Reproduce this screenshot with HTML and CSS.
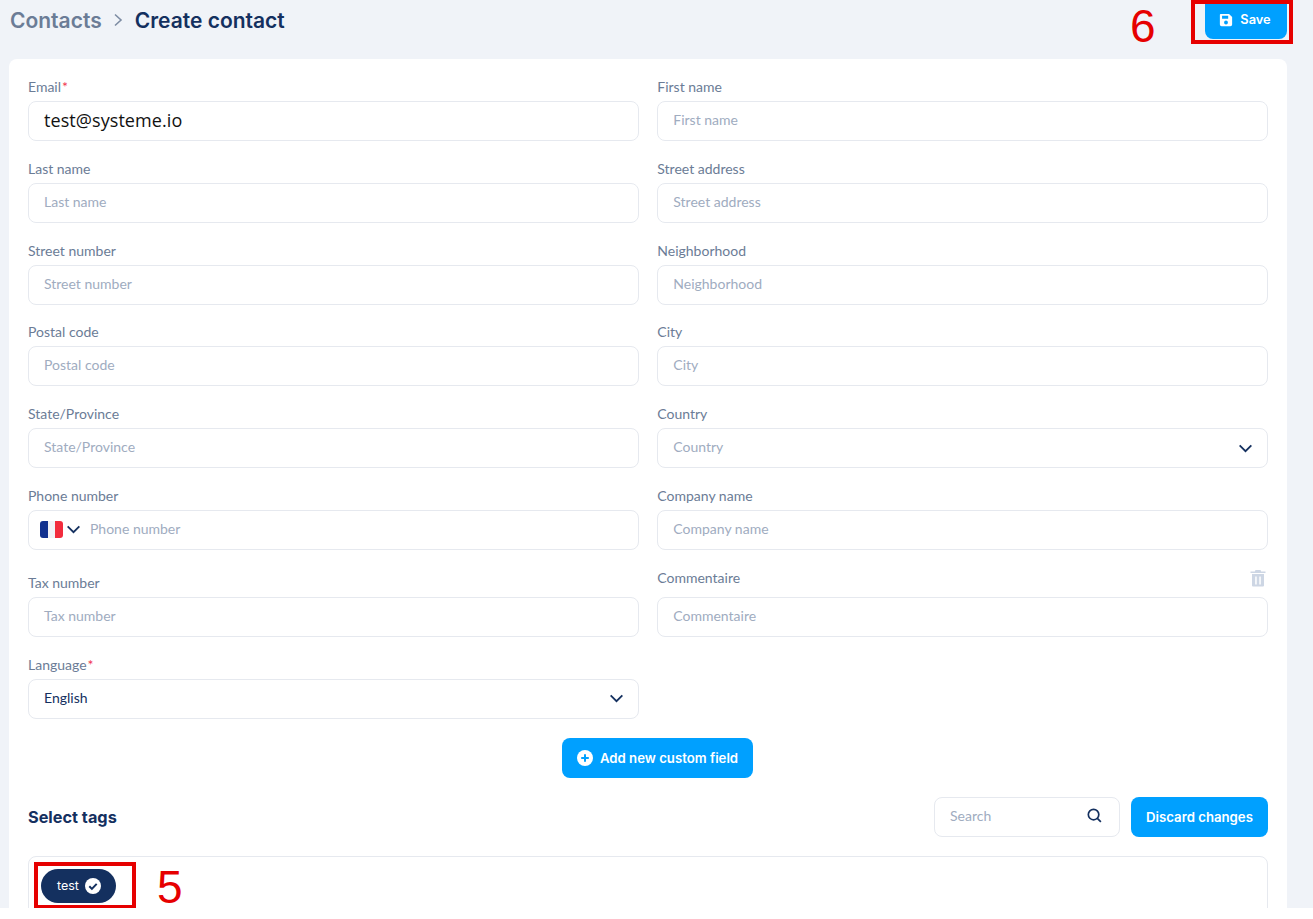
FILE: index.html
```html
<!DOCTYPE html>
<html lang="en">
<head>
<meta charset="utf-8">
<title>Create contact</title>
<link rel="stylesheet" href="styles.css">
</head>
<body>
<div class="page">
  <header class="topbar">
    <nav class="crumbs">
      <span class="crumb-parent">Contacts</span>
      <svg class="crumb-sep" viewBox="0 0 10 14" width="10" height="14"><path d="M2 1.500 8 7l-6 5.500" fill="none" stroke="#7d8ca3" stroke-width="1.600"/></svg>
      <span class="crumb-current">Create contact</span>
    </nav>
    <button class="btn btn-save">
      <svg viewBox="0 0 16 16" width="14" height="14"><path fill="#fff" fill-rule="evenodd" d="M2 1h9.500L15 4.500V13a2 2 0 0 1-2 2H3a2 2 0 0 1-2-2V2a1 1 0 0 1 1-1Zm1.500 2v3.500h7V3ZM8 8.600a2.200 2.200 0 1 0 0 4.400 2.200 2.200 0 0 0 0-4.400Z"/></svg>
      Save
    </button>
  </header>

  <main class="card">
    <div class="form-grid">
      <div class="field"><label class="label">Email<span class="req">*</span></label><div class="input"><span class="value-big">test@systeme.io</span></div></div>
      <div class="field"><label class="label">First name</label><div class="input"><span class="ph">First name</span></div></div>
      <div class="field"><label class="label">Last name</label><div class="input"><span class="ph">Last name</span></div></div>
      <div class="field"><label class="label">Street address</label><div class="input"><span class="ph">Street address</span></div></div>
      <div class="field"><label class="label">Street number</label><div class="input"><span class="ph">Street number</span></div></div>
      <div class="field"><label class="label">Neighborhood</label><div class="input"><span class="ph">Neighborhood</span></div></div>
      <div class="field"><label class="label">Postal code</label><div class="input"><span class="ph">Postal code</span></div></div>
      <div class="field"><label class="label">City</label><div class="input"><span class="ph">City</span></div></div>
      <div class="field"><label class="label">State/Province</label><div class="input"><span class="ph">State/Province</span></div></div>
      <div class="field"><label class="label">Country</label><div class="input input-select"><span class="ph">Country</span>
        <svg class="chev" viewBox="0 0 16 10" width="15" height="9"><path d="M1.500 1.500 8 8l6.500-6.500" fill="none" stroke="#14305f" stroke-width="2"/></svg></div></div>
      <div class="field"><label class="label">Phone number</label><div class="input input-phone">
        <span class="flag"><i class="flag-b"></i><i class="flag-w"></i><i class="flag-r"></i></span>
        <svg class="chev" viewBox="0 0 16 10" width="15" height="9"><path d="M1.500 1.500 8 8l6.500-6.500" fill="none" stroke="#14305f" stroke-width="2"/></svg>
        <span class="ph">Phone number</span></div></div>
      <div class="field"><label class="label">Company name</label><div class="input"><span class="ph">Company name</span></div></div>
      <div class="field"><label class="label">Tax number</label><div class="input"><span class="ph">Tax number</span></div></div>
      <div class="field">
        <div class="label-row"><label class="label">Commentaire</label>
          <svg viewBox="0 0 16 18" width="16" height="18"><path fill="#cdd6e4" fill-rule="evenodd" d="M5.500 1h5l.7 1.500H15.500V4H.5V2.500h4.300ZM2 5h12v11.500a1 1 0 0 1-1 1H3a1 1 0 0 1-1-1Zm3.200 2.500v8h1.500v-8Zm4.100 0v8h1.500v-8Z"/></svg>
        </div>
        <div class="input"><span class="ph">Commentaire</span></div></div>
      <div class="field"><label class="label">Language<span class="req">*</span></label><div class="input input-select"><span class="value">English</span>
        <svg class="chev" viewBox="0 0 16 10" width="15" height="9"><path d="M1.500 1.500 8 8l6.500-6.500" fill="none" stroke="#14305f" stroke-width="2"/></svg></div></div>
    </div>

    <div class="add-row">
      <button class="btn btn-add">
        <svg viewBox="0 0 16 16" width="16" height="16"><circle cx="8" cy="8" r="8" fill="#fff"/><path d="M8 4.200v7.600M4.200 8h7.600" stroke="#00a0ff" stroke-width="2"/></svg>
        Add new custom field
      </button>
    </div>

    <div class="tags-head">
      <h2 class="tags-title">Select tags</h2>
      <div class="tags-actions">
        <div class="search"><span class="ph ph-search">Search</span>
          <svg viewBox="0 0 16 16" width="15" height="15"><circle cx="7" cy="7" r="5.600" fill="none" stroke="#14305f" stroke-width="1.800"/><path d="m11 11 3.800 3.800" stroke="#14305f" stroke-width="1.800"/></svg>
        </div>
        <button class="btn btn-discard">Discard changes</button>
      </div>
    </div>

    <div class="tags-box">
      <span class="tag">test
        <svg viewBox="0 0 16 16" width="16" height="16"><circle cx="8" cy="8" r="8" fill="#fff"/><path d="m4.300 8.300 2.600 2.600 4.800-5" fill="none" stroke="#14305f" stroke-width="2"/></svg>
      </span>
    </div>
  </main>

  <div class="mark mark-save"></div>
  <div class="mark mark-tag"></div>
  <span class="num num-6">6</span>
  <span class="num num-5">5</span>
</div>
</body>
</html>
```
FILE: styles.css
```css
* { box-sizing: border-box; }
html, body { margin: 0; background: #fff; }
body { font-family: "Inter", "Liberation Sans", sans-serif; }
.page {
  position: relative;
  height: 908px;
  background: #f0f3f8;
  padding: 0 26px 0 9px;
}
.topbar {
  height: 59px;
  display: flex;
  justify-content: space-between;
  align-items: flex-start;
}
.crumbs {
  display: flex;
  align-items: center;
  gap: 11.500px;
  height: 40px;
  padding-left: 1px;
  font-size: 21px;
  font-weight: 600;
}
.crumb-parent { color: #6b7c96; }
.crumb-current { color: #14305f; }
.btn {
  display: inline-flex;
  align-items: center;
  justify-content: center;
  border: 0;
  background: #00a0ff;
  color: #fff;
  font-family: inherit;
  font-size: 13.200px;
  font-weight: 600;
  height: 40px;
  border-radius: 8px;
}
.btn-save { width: 82px; height: 39px; gap: 7px; border-radius: 0 0 8px 8px; font-size: 12.800px; padding: 0 2px 0 0; }
.card {
  background: #fff;
  border-radius: 8px 8px 0 0;
  padding: 19px 19px 0;
  height: 849px;
  overflow: hidden;
}
.form-grid {
  display: grid;
  grid-template-columns: 1fr 1fr;
  column-gap: 18.600px;
  row-gap: 18.800px;
  align-items: end;
}
.label {
  display: block;
  font-family: "Lato", "Liberation Sans", sans-serif;
  font-size: 14px;
  line-height: 18px;
  color: #6b7c96;
  margin-bottom: 5px;
}
.label-row {
  display: flex;
  justify-content: space-between;
  align-items: flex-start;
  height: 22px;
  margin-bottom: 6px;
  padding-right: 2px;
}
.label-row .label { margin: 0; }
.req { color: #f0354f; margin-left: 1px; }
.input {
  height: 40px;
  display: flex;
  align-items: center;
  padding: 0 14px 3px 15px;
  border: 1px solid #e6e9ef;
  border-radius: 8px;
  background: #fff;
}
.input-select { justify-content: space-between; }
.input-select .chev { margin-top: 3px; }
.input-phone { padding-left: 11px; gap: 3px; }
.input-phone .flag, .input-phone .chev { margin-top: 3px; }
.input-phone .ph { margin-left: 6px; }
.ph {
  font-family: "Lato", "Liberation Sans", sans-serif;
  font-size: 14px;
  color: #a0acbf;
}
.value {
  font-family: "Lato", "Liberation Sans", sans-serif;
  font-size: 14px;
  color: #14305f;
}
.value-big {
  font-family: "Open Sans", "Liberation Sans", sans-serif;
  font-size: 18px;
  letter-spacing: .07px;
  color: #111;
}
.flag {
  display: flex;
  width: 23px;
  height: 17px;
  border-radius: 3px;
  overflow: hidden;
}
.flag i { flex: 1; }
.flag-b { background: #12318f; }
.flag-w { background: #f2f2f6; }
.flag-r { background: #f22c3d; }
.add-row {
  display: flex;
  justify-content: center;
  margin-top: 19px;
  padding-left: 19px;
}
.btn-add { width: 191px; gap: 7px; }
.tags-head {
  display: flex;
  justify-content: space-between;
  align-items: center;
  margin-top: 19px;
}
.tags-title {
  margin: 0;
  font-size: 16.300px;
  font-weight: 700;
  color: #14305f;
}
.tags-actions { display: flex; gap: 11px; }
.search {
  width: 186px;
  height: 40px;
  display: flex;
  align-items: center;
  justify-content: space-between;
  padding: 0 17px 2px 15px;
  border: 1px solid #e6e9ef;
  border-radius: 8px;
}
.btn-discard { width: 137px; }
.tags-box {
  margin-top: 19px;
  height: 120px;
  padding: 12px;
  border: 1px solid #e6e9ef;
  border-radius: 8px;
}
.tag {
  display: inline-flex;
  align-items: center;
  gap: 6px;
  height: 34px;
  width: 75px;
  padding-left: 16px;
  border-radius: 17px;
  background: #14305f;
  color: #fff;
  font-size: 12.500px;
}
.mark {
  position: absolute;
  border: 4px solid #e60000;
}
.mark-save { left: 1191px; top: 0; width: 102px; height: 44px; }
.mark-tag { left: 34px; top: 862px; width: 102px; height: 46px; border-bottom-width: 3px; }
.num {
  position: absolute;
  font-family: "Liberation Sans", sans-serif;
  color: #e60000;
  font-size: 46px;
  line-height: 52px;
}
.num-6 { left: 1130px; top: 0; }
.num-5 { left: 157px; top: 861px; }
```
